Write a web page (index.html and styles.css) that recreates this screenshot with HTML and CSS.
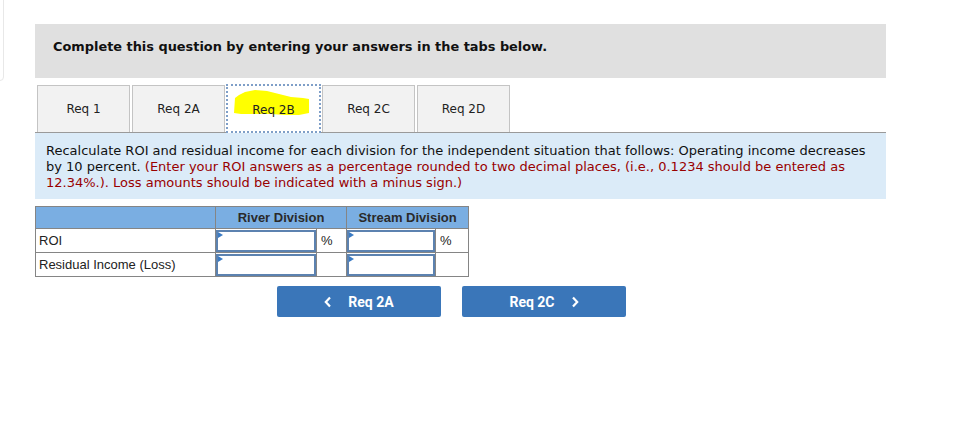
FILE: index.html
```html
<!DOCTYPE html>
<html>
<head>
<meta charset="utf-8">
<link rel="stylesheet" href="styles.css">
</head>
<body>
<div class="edge"></div>
<div class="wrap">
  <div class="banner">Complete this question by entering your answers in the tabs below.</div>
  <div class="tabs">
    <div class="tab">Req 1</div>
    <div class="tab">Req 2A</div>
    <div class="tab active">
      <svg class="marker" width="80" height="30" viewBox="0 0 80 30"><path d="M2 8 L6 5 L12 2 L22 0 L34 1 L46 4 L58 7 L70 8 L76 9 L76 23 L66 25 L52 25 L38 24 L22 24 L8 24 L1 23 Z" fill="#ffff00"/></svg>
      <span class="tlabel">Req 2B</span>
    </div>
    <div class="tab">Req 2C</div>
    <div class="tab">Req 2D</div>
  </div>
  <div class="info">Recalculate ROI and residual income for each division for the independent situation that follows: Operating income decreases by 10 percent. <span class="red">(Enter your ROI answers as a percentage rounded to two decimal places, (i.e., 0.1234 should be entered as 12.34%.). Loss amounts should be indicated with a minus sign.)</span></div>
  <table class="grid">
    <colgroup>
      <col class="c1"><col class="c2"><col class="c3"><col class="c4"><col class="c5">
    </colgroup>
    <tr class="head">
      <th></th>
      <th colspan="2">River Division</th>
      <th colspan="2">Stream Division</th>
    </tr>
    <tr>
      <td class="lbl">ROI</td>
      <td class="in"><div class="box"><span class="tri"></span></div></td>
      <td class="pct">%</td>
      <td class="in"><div class="box"><span class="tri"></span></div></td>
      <td class="pct">%</td>
    </tr>
    <tr>
      <td class="lbl">Residual Income (Loss)</td>
      <td class="in"><div class="box"><span class="tri"></span></div></td>
      <td class="pct"></td>
      <td class="in"><div class="box"><span class="tri"></span></div></td>
      <td class="pct"></td>
    </tr>
  </table>
  <div class="nav">
    <div class="btn"><svg width="8" height="12" viewBox="0 0 8 12"><path d="M6 1.5 L1.8 6 L6 10.5" fill="none" stroke="#fff" stroke-width="2.2"/></svg><span>Req 2A</span></div>
    <div class="btn"><span>Req 2C</span><svg width="8" height="12" viewBox="0 0 8 12"><path d="M2 1.5 L6.2 6 L2 10.5" fill="none" stroke="#fff" stroke-width="2.2"/></svg></div>
  </div>
</div>
</body>
</html>
```
FILE: styles.css
```css
html, body {
  margin: 0;
  padding: 0;
  background: #ffffff;
}
body {
  position: relative;
  width: 974px;
  height: 443px;
  overflow: hidden;
}
.edge {
  position: absolute;
  left: -10px;
  top: -10px;
  width: 12px;
  height: 89px;
  border: 1px solid #e8e8e8;
  border-radius: 4px;
}
.wrap {
  padding: 24px 0 0 35px;
  width: 851px;
}
.banner {
  height: 54px;
  box-sizing: border-box;
  background: #e0e0e0;
  padding: 15px 0 0 18px;
  font-family: "DejaVu Sans", Verdana, sans-serif;
  font-weight: bold;
  font-size: 12.9px;
  line-height: 16px;
  color: #111;
}
.tabs {
  display: flex;
  gap: 2px;
  margin-top: 7px;
  padding-left: 2px;
  height: 47px;
  position: relative;
  z-index: 2;
}
.tab {
  width: 93px;
  height: 47px;
  box-sizing: border-box;
  border: 1px solid #c4c4c4;
  border-bottom: none;
  background: #f2f2f2;
  display: flex;
  align-items: center;
  justify-content: center;
  font-family: "DejaVu Sans", Verdana, sans-serif;
  font-size: 12px;
  color: #222;
  position: relative;
}
.tab.active {
  background: #ffffff;
  border: 2px dotted #7f9fc8;
  width: 95px;
  height: 49px;
  margin: -1px -1px 0 -1px;
}
.marker {
  position: absolute;
  left: 5px;
  top: 4px;
}
.tlabel {
  position: relative;
  margin-top: 2px;
}
.info {
  background: #dbebf8;
  border-top: 1px solid #9a9a9a;
  padding: 10px 8px 8px 11px;
  font-family: "DejaVu Sans", Verdana, sans-serif;
  font-size: 13px;
  line-height: 16px;
  color: #111;
}
.red {
  color: #990000;
}
.grid {
  margin-top: 7px;
  border-collapse: collapse;
  table-layout: fixed;
  width: 434px;
  font-family: "Liberation Sans", Arial, sans-serif;
  font-size: 13px;
  color: #222;
}
.c1 { width: 180px; }
.c2 { width: 101px; }
.c3 { width: 30px; }
.c4 { width: 89px; }
.c5 { width: 33px; }
.grid th, .grid td {
  border: 1px solid #858585;
  padding: 0;
}
.head th {
  background: #7aaee2;
  height: 21px;
  font-weight: bold;
  font-size: 13px;
  color: #2a2a2a;
  text-align: center;
}
.grid td {
  height: 23px;
}
.lbl {
  padding-left: 3px !important;
}
.pct {
  padding-left: 4px !important;
}
.in {
  position: relative;
}
.box {
  height: 22px;
  box-sizing: border-box;
  border: 2px solid #5c82b0;
  background: #fff;
  position: relative;
}
.tri {
  position: absolute;
  left: 0;
  top: 0;
  width: 0;
  height: 0;
  border-top: 3px solid transparent;
  border-bottom: 3px solid transparent;
  border-left: 5px solid #3b7bc4;
}
.nav {
  display: flex;
  gap: 21px;
  margin: 9px 0 0 242px;
}
.btn {
  width: 164px;
  height: 31px;
  background: #3a76b9;
  border-radius: 2px;
  display: flex;
  align-items: center;
  justify-content: center;
  gap: 16px;
  color: #fff;
  font-family: Roboto, "Liberation Sans", sans-serif;
  font-weight: bold;
  font-size: 14px;
}
```
